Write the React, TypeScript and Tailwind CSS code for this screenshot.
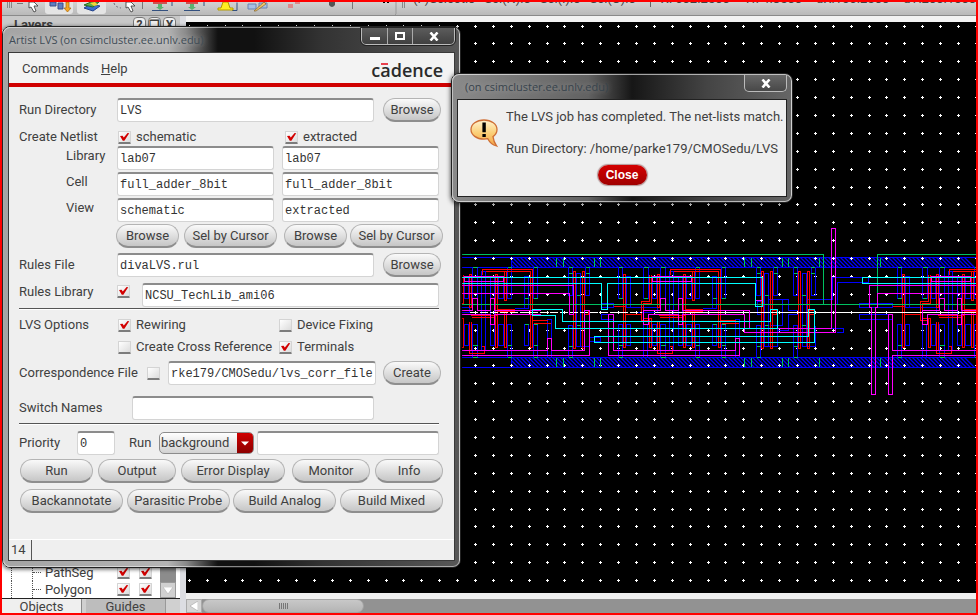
import { useId, useState } from "react";
import type { ReactNode } from "react";

const sans = "font-[Roboto,'Liberation_Sans',Arial,sans-serif] text-[13px] leading-4 text-[#404040]";
const fieldClass =
  "h-6 min-w-0 rounded-[3px] border border-t-2 border-[#d4d4d4] border-t-[#8c8c8c] bg-white px-[2px] pt-px font-['Liberation_Mono','Courier_New',monospace] text-xs text-[#333] outline-none";
const pillClass =
  "h-6 shrink-0 cursor-pointer whitespace-nowrap rounded-full border border-[#b4b4b4] border-b-2 border-b-[#8e8e8e] bg-linear-to-b from-[#fafafa] to-[#c6c6c6] text-center hover:to-[#b8b8b8]";

function Pill({ children, className = "" }: { children: ReactNode; className?: string }) {
  return (
    <button type="button" className={`${pillClass} ${className}`}>
      {children}
    </button>
  );
}

function Check({ label, hidden, on = false, className = "" }: { label: string; hidden?: boolean; on?: boolean; className?: string }) {
  const id = useId();
  const [checked, setChecked] = useState(on);
  return (
    <span className={`flex items-center gap-[5px] ${className}`}>
      <span className="relative block size-[13px] shrink-0">
        <input
          id={id}
          type="checkbox"
          checked={checked}
          aria-label={hidden ? label : undefined}
          onChange={(e) => setChecked(e.target.checked)}
          className="block size-[13px] appearance-none rounded-[1px] border border-[#d4d4d4] border-b-2 border-b-[#7c7c7c] bg-linear-to-br from-white to-[#dcdcdc]"
        />
        {checked && (
          <svg viewBox="0 0 13 13" className="pointer-events-none absolute inset-0 size-[13px]">
            <path d="M2 5 L4.600 4.800 L5.800 6.600 L9.600 2 L11.200 2.200 L6.400 9.800 L4.800 9.800 Z" fill="#d20000" />
          </svg>
        )}
      </span>
      {!hidden && (
        <label htmlFor={id} className="whitespace-nowrap">
          {label}
        </label>
      )}
    </span>
  );
}

function Field({ label, value = "", className = "" }: { label: string; value?: string; className?: string }) {
  return <input type="text" aria-label={label} defaultValue={value} className={`${fieldClass} ${className}`} />;
}

/* one row of the netlist block: schematic on the left, extracted on the right */
function NetRow({ label, left, right }: { label: string; left: string; right: string }) {
  const id = useId();
  return (
    <div className="flex h-6 gap-2">
      <label htmlFor={id} className="-mr-2 w-[98px] shrink-0 pl-[47px] pt-[2px]">
        {label}
      </label>
      <input id={id} type="text" defaultValue={left} className={`${fieldClass} flex-1`} />
      <Field label={`${label} (extracted)`} value={right} className="flex-1" />
    </div>
  );
}

function LvsWindow() {
  return (
    <section className={`absolute left-0 top-6 w-[459px] rounded-lg border border-[#222] shadow-[0_1px_4px_rgba(0,0,0,0.7)] ${sans}`}>
      <div className="rounded-[7px] border border-white/50 bg-[linear-gradient(90deg,#a4a4a4_0,#b4b4b4_36%,#8a8a8a_40%,#111_47%,#111_55%,#333_70%,#585858_100%)] pb-[5px] pl-1 pr-1">
        <header className="flex h-6 items-center pl-px">
          <h1 className="flex-1 whitespace-nowrap font-['Open_Sans','Noto_Sans',sans-serif] text-[11px] leading-5 text-[#3f4c56] [text-shadow:0_0_6px_rgba(255,255,255,0.6)]">
            Artist LVS (on csimcluster.ee.unlv.edu)
          </h1>
          <div className="flex h-[17px] self-start overflow-hidden rounded-b-[5px] border border-t-0 border-[#bbb] bg-linear-to-b from-[#5c5c5c] to-[#404040] outline outline-[#222]">
            <button type="button" aria-label="Minimize" className="flex w-[26px] items-end justify-center border-r border-[#aaa] pb-1">
              <span className="h-[3px] w-[10px] bg-white" />
            </button>
            <button type="button" aria-label="Maximize" className="flex w-[25px] items-center justify-center border-r border-[#aaa]">
              <span className="h-2 w-[10px] border-2 border-white" />
            </button>
            <button type="button" aria-label="Close" className="flex w-[41px] items-center justify-center">
              <CloseMark />
            </button>
          </div>
        </header>

        <div className="border border-[#3a3a3a] bg-[#efefef]">
          <div className="flex h-[30px] items-center gap-3 bg-[#f3f3f3] pl-[13px] pr-[11px]">
            <button type="button" className="pt-[2px]">Commands</button>
            <button type="button" className="pt-[2px]">
              <u>H</u>elp
            </button>
            <span className="relative ml-auto pt-[3px] font-['Open_Sans',sans-serif] text-lg font-semibold leading-6 text-[#2b2b2b]">
              cadence
              <span className="absolute left-[10px] top-[8px] h-[2px] w-[7px] bg-[#e8414d]" />
            </span>
          </div>
          <div className="h-1 bg-[#d00000]" />

          <form className="pl-[10px] pr-[11px] pt-[11px]" onSubmit={(e) => e.preventDefault()}>
            <div className="pr-1">
              <div className="-mr-[2px] flex h-6 items-center">
                <label htmlFor="run-dir" className="w-[98px] shrink-0">Run Directory</label>
                <input id="run-dir" type="text" defaultValue="LVS" className={`${fieldClass} mr-[9px] flex-1`} />
                <Pill className="w-[58px]">Browse</Pill>
              </div>

              <div className="mt-[6px] flex h-[18px] items-center">
                <span className="w-[99px] shrink-0">Create Netlist</span>
                <Check label="schematic" on className="w-[167px]" />
                <Check label="extracted" on />
              </div>
              <div className="flex flex-col gap-[2px]">
                <NetRow label="Library" left="lab07" right="lab07" />
                <NetRow label="Cell" left="full_adder_8bit" right="full_adder_8bit" />
                <NetRow label="View" left="schematic" right="extracted" />
              </div>
            </div>
            <div className="mt-[2px] flex justify-end">
              <Pill className="mr-[5px] w-[63px]">Browse</Pill>
              <Pill className="mr-[7px] w-[93px]">Sel by Cursor</Pill>
              <Pill className="mr-[3px] w-[63px]">Browse</Pill>
              <Pill className="w-[93px]">Sel by Cursor</Pill>
            </div>

            <div className="pr-1">
              <div className="-mr-[2px] mt-[5px] flex h-6 items-center">
                <label htmlFor="rules-file" className="w-[98px] shrink-0">Rules File</label>
                <input id="rules-file" type="text" defaultValue="divaLVS.rul" className={`${fieldClass} mr-[9px] flex-1`} />
                <Pill className="w-[58px]">Browse</Pill>
              </div>
              <div className="mt-[6px] flex h-6 items-start">
                <span className="w-[98px] shrink-0 pt-px">Rules Library</span>
                <Check label="Use rules library" hidden on className="mr-3 mt-[2px]" />
                <Field label="Rules Library" value="NCSU_TechLib_ami06" className="flex-1" />
              </div>

              <div className="mt-px border-b border-white bg-[#555] pt-px" />

              <div className="mt-1 flex h-[22px] items-center">
                <span className="w-[99px] shrink-0">LVS Options</span>
                <Check label="Rewiring" on className="w-[161px]" />
                <Check label="Device Fixing" />
              </div>
              <div className="flex h-[22px] items-center pl-[99px]">
                <Check label="Create Cross Reference" className="w-[161px]" />
                <Check label="Terminals" on />
              </div>

              <div className="-mr-[2px] mt-[3px] flex h-6 items-center">
                <span className="w-[128px] shrink-0 whitespace-nowrap">Correspondence File</span>
                <Check label="Use correspondence file" hidden className="mr-2" />
                <Field label="Correspondence File" value="rke179/CMOSedu/lvs_corr_file" className="mr-[7px] flex-1 bg-transparent" />
                <Pill className="w-[58px]">Create</Pill>
              </div>
              <div className="mt-[11px] flex h-6 items-center pr-[65px]">
                <label htmlFor="switch-names" className="w-[113px] shrink-0">Switch Names</label>
                <input id="switch-names" type="text" className={`${fieldClass} flex-1`} />
              </div>

              <div className="mt-[3px] border-b border-white bg-[#555] pt-px" />

              <div className="mt-[6px] flex h-6 items-center">
                <label htmlFor="priority" className="w-[58px] shrink-0">Priority</label>
                <input id="priority" type="text" defaultValue="0" className={`${fieldClass} mr-[14px] w-[38px]`} />
                <label htmlFor="run-mode" className="w-[30px] shrink-0">Run</label>
                <span className="relative mr-[3px] flex h-[22px] w-[95px] overflow-hidden rounded-[5px] border border-[#8c8c8c] bg-linear-to-b from-white to-[#d2d2d2]">
                  <select id="run-mode" defaultValue="background" className="w-full cursor-pointer appearance-none bg-transparent pl-px outline-none">
                    <option>background</option>
                    <option>foreground</option>
                  </select>
                  <span className="pointer-events-none absolute inset-y-0 right-0 flex w-4 items-center justify-center bg-linear-to-b from-[#d00000] to-[#8c0000]">
                    <svg width="8" height="5" viewBox="0 0 8 5"><path d="M0 0.500h8L4 4.500z" fill="#fff" /></svg>
                  </span>
                </span>
                <Field label="Run host" className="flex-1" />
              </div>
            </div>

            <div className="mt-1 flex pl-px">
              <Pill className="mr-[5px] w-[73px]">Run</Pill>
              <Pill className="mr-[5px] w-[78px]">Output</Pill>
              <Pill className="mr-[7px] w-[104px]">Error Display</Pill>
              <Pill className="mr-[5px] w-[78px]">Monitor</Pill>
              <Pill className="w-[68px]">Info</Pill>
            </div>
            <div className="mt-[6px] flex justify-between pl-px">
              <Pill className="w-[103px]">Backannotate</Pill>
              <Pill className="w-[103px]">Parasitic Probe</Pill>
              <Pill className="w-[103px]">Build Analog</Pill>
              <Pill className="w-[103px]">Build Mixed</Pill>
            </div>
          </form>

          <footer className="mt-[26px] flex h-[21px] items-stretch border-t border-white">
            <span className="w-[23px] border-r border-[#555] pl-[2px] pt-[2px]">14</span>
          </footer>
        </div>
      </div>
    </section>
  );
}

function CloseMark() {
  return (
    <svg width="10" height="9" viewBox="0 0 10 9">
      <path d="M1.500 0.500 L8.500 8.500 M8.500 0.500 L1.500 8.500" stroke="#fff" strokeWidth="2.600" />
    </svg>
  );
}

function ResultDialog() {
  return (
    <section role="dialog" aria-label="LVS result" className={`absolute left-[449px] top-[71px] w-[342px] rounded-lg border border-[#222] shadow-[0_1px_5px_rgba(0,0,0,0.8)] ${sans}`}>
      <div className="rounded-[7px] border border-white/60 bg-[linear-gradient(90deg,#8a8a8a_0,#6c6c6c_30%,#626262_40%,#161616_53%,#444_75%,#666_100%)] px-1 pb-1">
        <header className="flex h-6 items-center pl-2">
          <h2 className="flex-1 font-['Open_Sans','Noto_Sans',sans-serif] text-[11px] leading-5 text-[#37434c] [text-shadow:0_0_6px_rgba(255,255,255,0.4)]">(on csimcluster.ee.unlv.edu)</h2>
          <button type="button" aria-label="Close" className="flex h-[17px] w-[43px] items-center justify-center self-start rounded-b-[5px] border border-t-0 border-[#bbb] bg-linear-to-b from-[#686868] to-[#484848]">
            <CloseMark />
          </button>
        </header>
        <div className="border border-[#222] bg-[#efefef] pb-[11px] pt-[9px]">
          <div className="flex">
            <svg width="32" height="32" viewBox="0 0 32 32" className="ml-[10px] mr-[6px] mt-[8px]">
              <defs>
                <linearGradient id="bubble" x1="0" y1="0" x2="0" y2="1">
                  <stop offset="0" stopColor="#fff3d0" />
                  <stop offset="0.5" stopColor="#fbcf77" />
                  <stop offset="1" stopColor="#f3a345" />
                </linearGradient>
              </defs>
              <path d="M16 3 C23.500 3 29 7.400 29 12.500 C29 15.700 27.400 17.900 25 19.600 C25.400 23 26.400 26 28.600 29 C24.400 27.800 21.400 25 19.800 21.700 C18.600 22 17.400 22.100 16 22.100 C8.500 22.100 3 18 3 12.500 C3 7.400 8.500 3 16 3 Z" fill="url(#bubble)" stroke="#cf6f35" strokeWidth="1.300" />
              <path d="M14.400 5.600h3.400v9.600h-3.400z M14.400 17h3.400v3h-3.400z" fill="#000" />
            </svg>
            <div className="whitespace-nowrap text-[13px] leading-4">
              <p>The LVS job has completed. The net-lists match.</p>
              <p className="mt-4">Run Directory: /home/parke179/CMOSedu/LVS</p>
            </div>
          </div>
          <div className="mt-2 flex justify-center">
            <button type="button" className="h-5 w-[49px] cursor-pointer rounded-full bg-linear-to-b from-[#d40000] to-[#a00000] font-['Liberation_Sans',Arial,sans-serif] text-xs font-bold text-white shadow-[0_0_1px_1px_rgba(120,60,60,0.5)]">
              Close
            </button>
          </div>
        </div>
      </div>
    </section>
  );
}

/* layout drawing: all shapes are on a grid of thirds of a pixel */
const bars = (list: number[][]) => list.map(([x0, y0, x1, y1]) => `M${x0} ${y0}H${x1}V${y1}H${x0}Z`).join("");

const adderBlue = bars([
  [490, 142, 502, 236], [490, 313, 502, 412], [514, 169, 526, 262], [514, 313, 526, 376],
  [565, 142, 580, 236], [565, 313, 577, 412], [592, 169, 604, 236], [592, 313, 604, 376],
  [616, 142, 631, 236], [616, 313, 631, 412], [643, 154, 655, 391], [670, 169, 682, 376],
  [694, 169, 709, 236], [694, 313, 709, 376], [721, 142, 733, 236], [721, 313, 733, 412],
  [772, 169, 784, 265], [772, 313, 784, 376], [799, 142, 811, 236], [799, 313, 811, 412],
]) + "M526 262H607V277H526M742 265H772";
const adderRed = bars([
  [505, 163, 511, 383], [583, 295, 589, 383], [607, 163, 613, 262], [685, 163, 691, 383],
  [712, 277, 718, 383],
]) + "M646 163V148H796V383H790V154H655M712 154V241H718V154M583 163V244H559V301H583M589 163V250H565V295H583M475 253H508M475 259H508M511 283H559M607 304V400H652V379H643M613 304V391M610 286H688M613 292H685M691 268H742V274H691M796 301H841M799 310H850";
const adderGreen = "M490 142H502M565 142H580M616 142H631M721 142H733M799 142H811M490 236H502M565 236H577M772 236H784M799 236H811M772 313H784M799 313H811M490 376H502M616 376H631M721 376H733M799 376H811M490 412H502M616 412H631M721 412H733M799 412H811";
const adderMagenta = "M592 169H709V184H592ZM565 313V271H616V236H631V271H670V236H682V271H820M565 313H580V283H670V313H682V283H820";

const gateBlue = bars([
  [-15, 142, -3, 226], [-15, 316, -3, 412], [10, 160, 22, 380], [37, 142, 49, 226],
]) + "M22 380H49V316";
const gateRed = bars([[0, 154, 6, 385], [27, 154, 33, 385]]) + "M33 271H46V283H33";
const gateGreen = "M-15 142H-3M37 142H49M-15 160H-3M37 160H49M10 226H22M10 316H22M-15 380H-3M-15 412H-3";

const adders = [-564, 0, 838];
const gates = [355, 919, 1031];

const hatch = Array.from({ length: 114 }, (_, i) => `M${172 + i * 12} 112l30 30m-30 270l30 30`).join("") +
  "M169 121l21 21M169 133l9 9M169 421l21 21M169 433l9 9";

/* nine snap points fall on every 161 px */
const steps = [0, 17, 35, 53, 71, 89, 107, 125, 143];
const starPath = steps
  .flatMap((y) => steps.map((x) => `M${x} ${y + 1}h3v1h-3zM${x + 1} ${y}h1v3h-1z`))
  .join("");

function Canvas() {
  return (
    <div className="relative min-h-0 flex-1 overflow-hidden bg-black">
      <svg className="absolute inset-0 size-full" shapeRendering="crispEdges" role="img" aria-label="Layout view">
        <defs>
          <pattern id="stars" x="224" y="25" width="161" height="161" patternUnits="userSpaceOnUse">
            <path d={starPath} fill="#fff" />
          </pattern>
          <clipPath id="visible"><rect x="20" y="0" width="3000" height="600" /></clipPath>
        </defs>
        <g transform="translate(-186 -22)">
          <g transform="translate(455.167 220.167) scale(0.333334)" fill="none" stroke="#0000ff" strokeWidth="3" clipPath="url(#visible)">
            <path d={hatch} strokeWidth="4" shapeRendering="auto" />
            <path d="M20 112H1566M20 142H1566M20 412H1566M20 442H1566M169 112V142M169 412V442" />
          </g>
          <rect x="186" y="22" width="4000" height="3000" fill="url(#stars)" />
          <g transform="translate(455.167 220.167) scale(0.333334)" fill="none" strokeWidth="3" clipPath="url(#visible)">
            <g stroke="#0000ff">
              {adders.map((x) => <path key={x} d={adderBlue} transform={`translate(${x})`} />)}
              {gates.map((x) => <path key={x} d={gateBlue} transform={`translate(${x})`} />)}
              <path d="M277 298H289V412H277ZM841 298H853V412H841ZM439 250H475V262H439ZM439 283H475V298H439ZM404 352H436V364H404Z" />
              <path d="M940 238H1000V271H1030V283H1000V331H968M982 238V316H943M1054 238H1132V172H1240V187H1147V253H1054M1213 250H1312V262H1213ZM1213 283H1312V298H1213ZM1130 325H1165V337H1145M907 244H919V283H907Z" />
            </g>
            <g stroke="#ff0000">
              {adders.map((x) => <path key={x} d={adderRed} transform={`translate(${x})`} />)}
              {gates.map((x) => <path key={x} d={gateRed} transform={`translate(${x})`} />)}
            </g>
            <g stroke="#00c060">
              <path d="M20 103H1105V253M20 253H1566M1566 103H1267V253" />
              <path d="M304 114V140M325 114V140M418 114V140M436 114V140M868 114V140M889 114V140M982 114V140M1000 114V140M1093 114V140M1276 114V140" />
              <path d="M304 414V440M325 414V440M418 414V440M436 414V440M868 414V440M889 414V440M982 414V440M1000 414V440M1093 414V440M1276 414V440" />
              {adders.map((x) => <path key={x} d={adderGreen} transform={`translate(${x})`} />)}
              {gates.map((x) => <path key={x} d={gateGreen} transform={`translate(${x})`} />)}
            </g>
            <g stroke="#ffffff">
              <path d="M45 277H560" strokeDasharray="24 6" />
              <path d="M600 277H1566" />
            </g>
            <g stroke="#ff00ff">
              {adders.map((x) => <path key={x} d={adderMagenta} transform={`translate(${x})`} />)}
              <path d="M20 196H355V283H343V220H20M20 391H277V355H290V391H389V271H404V406H20M460 406H853V355H841V391H475V283H460Z" />
              <path d="M820 271H883V325H1129V26H1142V337H868V283H820M901 241H922" />
              <path d="M1566 196H1243V262H1249V523H1261V262H1267V220H1566M1566 391H1312V283H1300V523H1312V406H1566" />
            </g>
            <path
              stroke="#00ffff"
              d="M20 172H922V259H901V190H457V268H439V190H20M232 268H322V304H946V268H967V325H301V286H232ZM418 349H1060V268H1078V367H418ZM1566 172H1222V190H1566"
            />
          </g>
        </g>
      </svg>
    </div>
  );
}

function Toolbar() {
  return (
    <div className={`flex h-[14px] shrink-0 overflow-hidden border-b border-[#8a8a8a] bg-linear-to-b from-[#d2d2d2] to-[#b9b9b9] ${sans}`}>
      <svg width="404" height="14" viewBox="2 2 404 14" className="shrink-0" aria-hidden="true">
        <path d="M7.500 2v6M9.500 2v6M11.500 2v6M402.500 2v6M404.500 2v6M407.500 2v6" stroke="#888" />
        <path d="M17 3h6v1h-6z" fill="#777" />
        <path d="M45 2h28v9q0 3-3 3h-22q-3 0-3-3zM77 2h29v9q0 3-3 3h-23q-3 0-3-3z" fill="#e4e4e4" />
        <path d="M29 2v6l2-1 3 5 2-1-2-5h4l-4-4zM126 2v6l2-1 3 5 2-1-2-5h4l-4-4z" fill="#fff" stroke="#333" strokeWidth="0.8" />
        <path d="M50 2h6v4h-6zM58 3h5v6h-5z" fill="#5f7cc0" stroke="#3b4c86" />
        <path d="M66 2h3v6h2l-3.500 4-3.500-4h2z" fill="#f5a623" stroke="#a8670a" strokeWidth="0.7" />
        <path d="M84 8l7-4 9 2-7 5z" fill="#3b6fd0" stroke="#22428a" />
        <path d="M84 5l7-3h8l-6 5z" fill="#62b04a" stroke="#2b6a22" />
        <path d="M90 3l5-1 3 3-4 1z" fill="#f1d53a" />
        <path d="M114 3q1 4 7 5" fill="none" stroke="#667" strokeDasharray="2 2" />
        <path d="M142.500 2v7M352.500 2v7" stroke="#777" />
        <path d="M153 3h14M186 3h12" stroke="#cf4f4f" strokeWidth="2" />
        <path d="M158 4h4v3h2l-4 3-4-3h2zM190 4h4v3h2l-4 3-4-3h2z" fill="#5bb070" />
        <path d="M152 10.500h16M184 10.500h16M172 2v4M204 2v4M232 10.500h5v-8" stroke="#33507f" fill="none" />
        <path d="M218 10v-2h3l2-6h5l2 6h3v2z" fill="#ffee22" stroke="#b39a00" />
        <path d="M248 4h8v5h-8zM259 3h8v5h-8z" fill="#a9c0e4" stroke="#6b84b0" />
        <path d="M254 11l10-9 2 2-10 7z" fill="#f0c26a" stroke="#7a5a20" strokeWidth="0.6" />
        <path d="M288 4h5v4h-5zM295 2h5v2h-5z" fill="#dd8a8a" />
        <path d="M329 2h6v3q-3 4-6 0z" fill="#555" />
        <path d="M383 2h2v1h-2zM387 2h2v1h-2z" fill="#000" />
        <path d="M394 16l2-2 0-12" stroke="#999" fill="none" />
      </svg>
      {/* status line is scrolled half out of view */}
      <div className="flex h-[5px] items-end gap-[14px] whitespace-pre pl-[7px]">
        <div className="flex gap-[9px]">
          <span>(F)Select:0</span>
          <span>Sel(N):0</span>
          <span>Sel(I):0</span>
          <span>Sel(O):0</span>
        </div>
        <div className="flex gap-[14px] border-l border-[#666] pl-[10px]">
          <span>X: 602.2500</span>
          <span>Y:74.8500</span>
          <span>dX:166.2500</span>
          <span>dY:200.1000</span>
          <span>D</span>
        </div>
      </div>
    </div>
  );
}

function TreeRow({ name }: { name: string }) {
  return (
    <div className="flex h-[17px] items-center">
      <span className="h-full w-[10px] border-r border-dotted border-[#555]" />
      <span className="ml-5 h-full w-px border-r border-dotted border-[#555]" />
      <span className="mr-1 w-2 border-t border-dotted border-[#555]" />
      <span className="w-[72px]">{name}</span>
      <Check label={`${name} visible`} hidden on className="mr-[9px]" />
      <Check label={`${name} selectable`} hidden on />
    </div>
  );
}

function LeftPanel() {
  return (
    <aside className={`flex w-[184px] shrink-0 flex-col overflow-hidden border-r-[6px] border-[#dcdde2] bg-[#d0d0d0] ${sans}`}>
      <div className="flex h-[14px] shrink-0 justify-between overflow-hidden bg-[#c8c8c8] pl-3 pr-1 pt-px font-bold">
        <span>Layers</span>
        <span className="flex gap-[2px] text-xs">
          <button type="button" className="h-4 w-[13px] rounded-sm border border-[#777] bg-[#eee] leading-3">?</button>
          <button type="button" className="h-4 w-[13px] rounded-sm border border-[#777] bg-[#eee] leading-3">❐</button>
          <button type="button" className="h-4 w-[13px] rounded-sm border border-[#777] bg-[#eee] leading-3">X</button>
        </span>
      </div>
      <div className="flex min-h-0 flex-1 border-b border-[#222] bg-white">
        <div className="flex flex-1 flex-col justify-end">
          <TreeRow name="PathSeg" />
          <TreeRow name="Polygon" />
        </div>
        <div className="mr-1 flex w-4 flex-col justify-end bg-[#8c8c8c]">
          <button type="button" aria-label="Scroll down" className="flex h-4 items-center justify-center border border-[#999] bg-[#d0d0d0]">
            <svg width="10" height="7" viewBox="0 0 10 7"><path d="M0 0h10L5 7z" fill="#fff" stroke="#aaa" strokeWidth="0.5" /></svg>
          </button>
        </div>
      </div>
      <div className="flex h-[14px] shrink-0 gap-1 overflow-hidden pr-[14px]">
        <button type="button" className="flex-1 border-r border-[#888] bg-[#efefef]">Objects</button>
        <button type="button" className="flex-1 border-r border-[#999] bg-[#bdbdbd]">Guides</button>
      </div>
    </aside>
  );
}

export default function App() {
  return (
    <main className="relative flex h-screen w-full flex-col overflow-hidden border-2 border-[#ff0000] bg-[#efefef]">
      <Toolbar />
      <div className="flex min-h-0 flex-1">
        <LeftPanel />
        <div className="flex min-w-0 flex-1 flex-col border-t-[6px] border-[#f2f2f2]">
          <Canvas />
          <div className="mt-[6px] flex h-[14px] shrink-0 bg-[#929292]">
            <button type="button" aria-label="Scroll left" className="flex w-4 items-center justify-center border border-[#aaa] bg-[#d4d4d4]">
              <svg width="8" height="10" viewBox="0 0 8 10"><path d="M8 0v10L0 5z" fill="#fff" stroke="#999" strokeWidth="0.5" /></svg>
            </button>
            <div className="flex w-[162px] items-center justify-center gap-px rounded-full border border-[#a4a4a4] bg-linear-to-b from-[#c8c8c8] to-[#b4b4b4]">
              <span className="h-[6px] w-px bg-[#777]" />
              <span className="h-[6px] w-px bg-[#777]" />
              <span className="h-[6px] w-px bg-[#777]" />
              <span className="h-[6px] w-px bg-[#777]" />
              <span className="h-[6px] w-px bg-[#777]" />
            </div>
          </div>
        </div>
      </div>
      <LvsWindow />
      <ResultDialog />
    </main>
  );
}
